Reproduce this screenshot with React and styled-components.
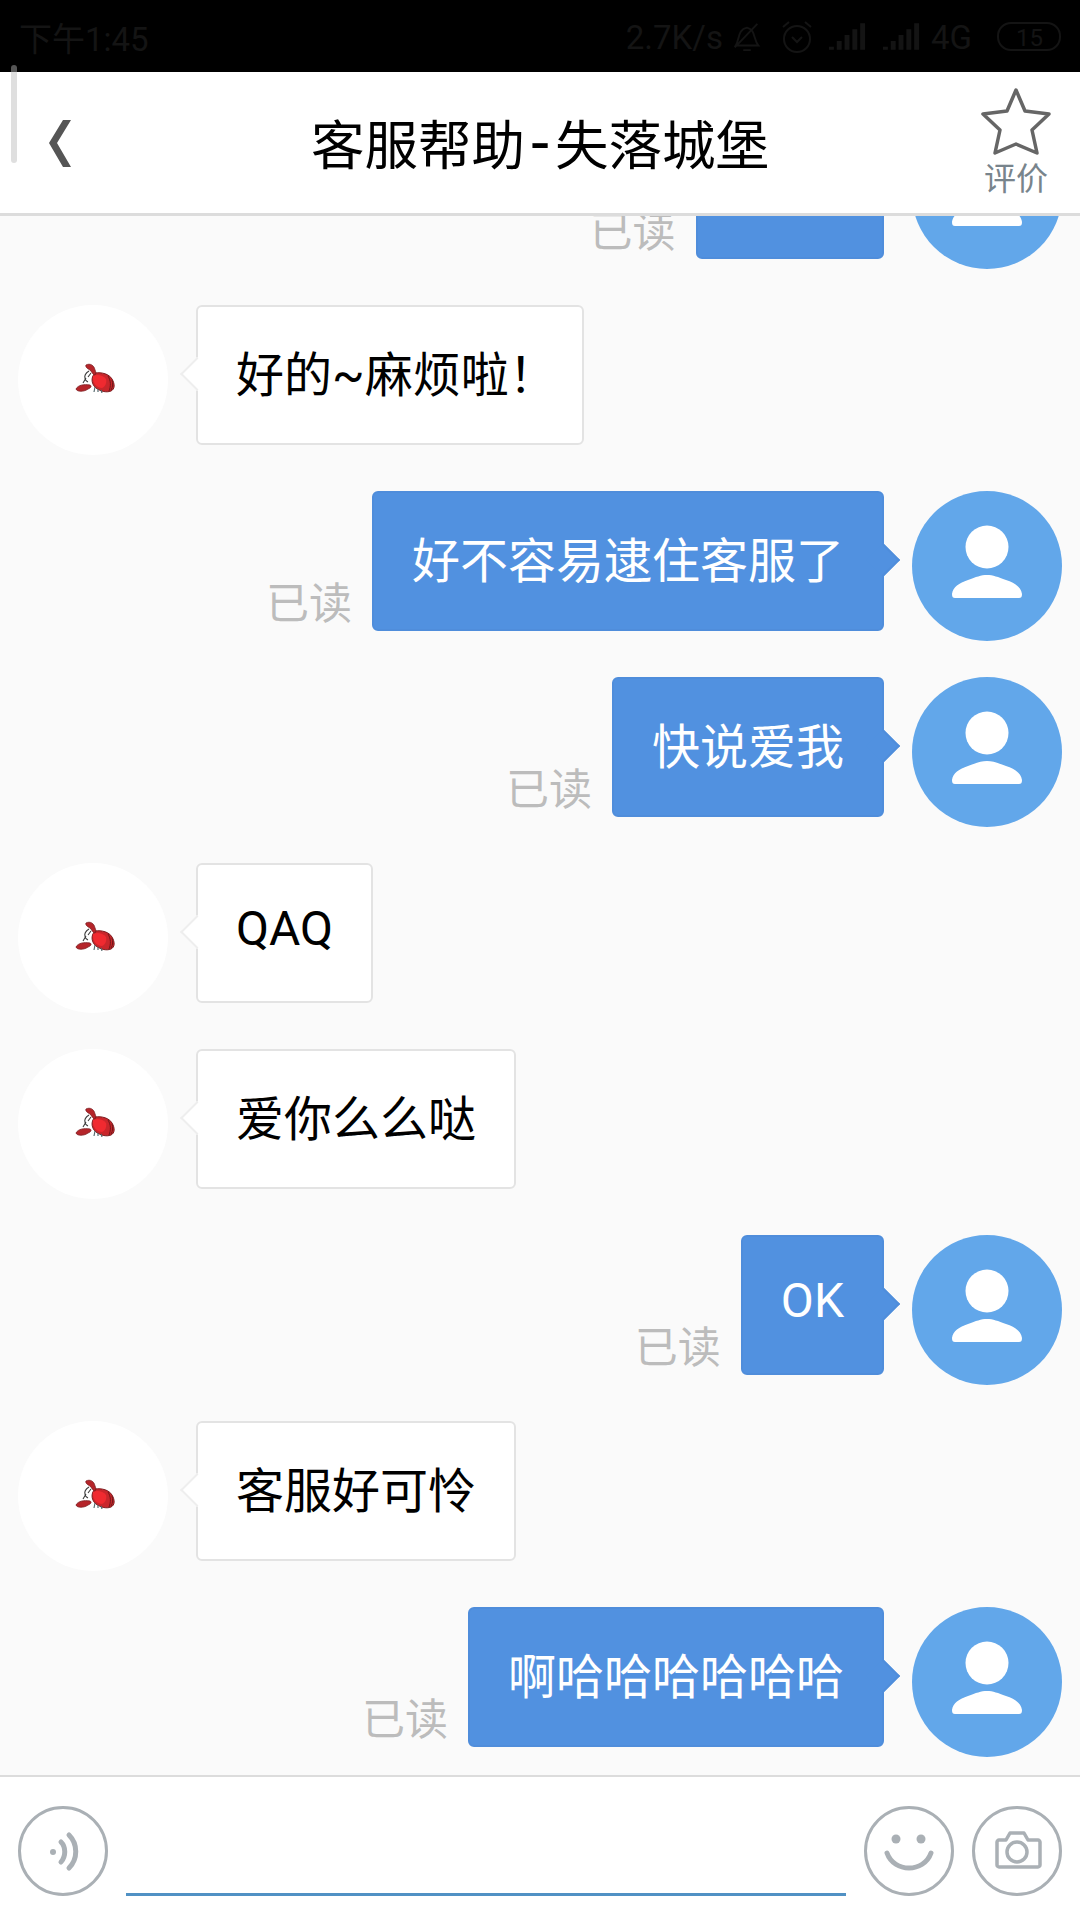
import React from "react";
import styled, { createGlobalStyle } from "styled-components";

const GlobalStyle = createGlobalStyle`
  html, body { margin: 0; padding: 0; background: #fafafa; }
  body { font-family: Roboto, "Noto Sans CJK SC", "Noto Sans", sans-serif; }
`;

const Page = styled.div`
  position: relative;
  width: 1080px;
  height: 1920px;
  display: flex;
  flex-direction: column;
  overflow: hidden;
`;

const StatusBar = styled.div`
  height: 72px;
  flex: none;
  background: #000;
  color: #141414;
  display: flex;
  align-items: center;
  justify-content: space-between;
  padding: 2px 17px 0 19px;
  box-sizing: border-box;
  font-size: 33px;
`;

const StatusRight = styled.div`
  display: flex;
  align-items: center;
`;

const StatusItem = styled.span`
  display: flex;
  align-items: center;
  margin-left: ${(p) => p.$gap}px;
`;

const ScrollMark = styled.div`
  position: absolute;
  z-index: 2;
  left: 11px;
  top: 65px;
  width: 6px;
  height: 98px;
  border-radius: 3px;
  background: linear-gradient(#555 0 7px, #dfdfdf 7px);
`;

const Header = styled.header`
  height: 144px;
  flex: none;
  box-sizing: border-box;
  background: #fff;
  border-bottom: 3px solid #dcdcdc;
  display: grid;
  grid-template-columns: 1fr auto 1fr;
  align-items: center;
  position: relative;
  z-index: 1;
`;

const Back = styled.div`
  padding-left: 48px;
  height: 50px;
  display: flex;
  align-items: center;
`;

const Title = styled.h1`
  margin: 5px 0 0;
  font-size: 53.5px;
  font-weight: 400;
  color: #000;
  line-height: 1;
  white-space: nowrap;
`;

const Dash = styled.span`
  display: inline-block;
  width: 30px;
  text-align: center;
  font-size: 64px;
  line-height: 53px;
`;

const Rate = styled.div`
  justify-self: end;
  width: 100px;
  margin-right: 14px;
  display: flex;
  flex-direction: column;
  align-items: center;
  gap: 3px;
  color: #78848c;
  font-size: 32px;
  line-height: 38px;
  align-self: start;
  padding-top: 15px;
`;

const Chat = styled.main`
  flex: 1;
  min-height: 0;
  overflow: hidden;
  background: #fafafa;
  display: flex;
  flex-direction: column;
  justify-content: flex-end;
  gap: 36px;
  padding: 0 18px 18px;
`;

const Row = styled.div`
  flex: none;
  display: flex;
  align-items: flex-start;
  justify-content: ${(p) => (p.$mine ? "flex-end" : "flex-start")};
`;

const Avatar = styled.div`
  width: 150px;
  height: 150px;
  flex: none;
  border-radius: 50%;
  background: ${(p) => (p.$mine ? "#62a7ea" : "#fff")};
  display: flex;
  align-items: center;
  justify-content: center;
`;

const Bubble = styled.div`
  position: relative;
  box-sizing: border-box;
  height: 140px;
  padding: 0 38px 9px;
  margin: ${(p) => (p.$mine ? "0 28px 0 0" : "0 0 0 28px")};
  ${(p) => (p.$width ? `width: ${p.$width}px;` : "")}
  border-radius: 6px;
  border: 2px solid ${(p) => (p.$mine ? "#4f8ddb" : "#e3e3e3")};
  background: ${(p) => (p.$mine ? "#5191e0" : "#fff")};
  color: ${(p) => (p.$mine ? "#fff" : "#000")};
  font-size: 48px;
  display: flex;
  align-items: center;
  white-space: nowrap;

  &::after {
    content: "";
    position: absolute;
    top: 50%;
    ${(p) => (p.$mine ? "right: -13px;" : "left: -13px;")}
    width: 22px;
    height: 22px;
    margin-top: -13px;
    background: inherit;
    transform: rotate(45deg);
    ${(p) =>
      p.$mine
        ? "border-top: 2px solid #4f8ddb; border-right: 2px solid #4f8ddb;"
        : "border-left: 2px solid #eeeeee; border-bottom: 2px solid #eeeeee;"}
  }
`;

const ReadLabel = styled.span`
  align-self: flex-end;
  margin: 0 20px 12px 0;
  height: 50px;
  line-height: 50px;
  font-size: 43px;
  color: #bcbcbc;
`;

const Composer = styled.footer`
  height: 145px;
  flex: none;
  box-sizing: border-box;
  background: #fff;
  border-top: 2px solid #dcdcdc;
  padding: 29px 18px 0;
  display: flex;
  align-items: flex-start;
`;

const RoundButton = styled.div`
  width: 90px;
  height: 90px;
  flex: none;
  margin-left: ${(p) => p.$gap || 0}px;
`;

const InputLine = styled.div`
  width: 720px;
  height: 90px;
  box-sizing: border-box;
  margin-left: 18px;
  border-bottom: 3px solid #5091c4;
`;

const LobsterIcon = styled.svg`
  margin: -4px 0 0 3px;
`;

const PersonIcon = styled.svg`
  margin-top: -9px;
`;

const Lobster = () => (
  <LobsterIcon width="40" height="30" viewBox="0 0 40 30">
    <path d="M20 10 C27 9 34 11 37 16 C40 21 40 26 36 28 C31 30 25 28 21 25 C17 22 15 15 20 10 Z" fill="#c9262b" stroke="#7c1b1e" strokeWidth="1" />
    <path d="M18 13 C22 11 28 12 31 16 C32 20 30 24 27 25 C22 25 17 20 18 13 Z" fill="#f02a30" />
    <path d="M33 13 C36 18 36 23 34 28 M37 17 C38 20 38 24 36 27" fill="none" stroke="#701719" strokeWidth="1" />
    <path d="M11 2 C15 0 19 2 20 7 C21 9 21 11 20 12 C18 12 17 9 15 7 C13 6 10 4 11 2 Z" fill="#b5252a" stroke="#7a1b1e" strokeWidth="0.8" />
    <path d="M14 8 C11 10 9 12 10 15 C10 17 11 18 13 19 M16 10 L13 14 M11 15 L8 20" fill="none" stroke="#3c3c3c" strokeWidth="1.1" />
    <path d="M1 26 C3 22 9 21 15 22 C17 23 16 25 13 26 C9 29 2 29 1 26 Z" fill="#b5252a" stroke="#7a1b1e" strokeWidth="0.8" />
    <path d="M20 24 L19 29 M23 26 L23 29 M26 27 L27 30" fill="none" stroke="#566a6e" strokeWidth="1.2" />
  </LobsterIcon>
);

const Person = () => (
  <PersonIcon width="72" height="73" viewBox="0 0 72 73">
    <circle cx="36" cy="22" r="21.5" fill="#fff" />
    <path d="M1 69 C2 62 8 58 17 55 C25 52 30 50 36 50 C42 50 47 52 55 55 C64 58 70 62 71 69 C71 72 70 73 68 73 L4 73 C2 73 1 72 1 69 Z" fill="#fff" />
  </PersonIcon>
);

const Ring = ({ children }) => (
  <svg width="90" height="90" viewBox="0 0 90 90" fill="none" stroke="#aab0b5" strokeWidth="3">
    <circle cx="45" cy="45" r="43.5" />
    {children}
  </svg>
);

const messages = [
  { mine: true, text: "你好!" },
  { text: "好的~麻烦啦！", width: 388 },
  { mine: true, text: "好不容易逮住客服了" },
  { mine: true, text: "快说爱我" },
  { text: "QAQ" },
  { text: "爱你么么哒" },
  { mine: true, text: "OK" },
  { text: "客服好可怜" },
  { mine: true, text: "啊哈哈哈哈哈哈" },
];

const Signal = () => (
  <svg width="39" height="28" viewBox="0 0 40 28" fill="#141414">
    <path d="M1 24h5v3H1zM9 18h5v9H9zM17 12h5v15h-5zM25 6h5v21h-5zM33 0h5v27h-5z" />
  </svg>
);

export default function App() {
  return (
    <Page>
      <GlobalStyle />
      <StatusBar>
        <span>下午1:45</span>
        <StatusRight>
          <span>2.7K/s</span>
          <StatusItem $gap={8}>
            <svg width="32" height="34" viewBox="0 0 34 34" fill="none" stroke="#141414" strokeWidth="2">
              <path d="M5 26 C9 20 7 9 17 7 C26 9 24 20 29 26 Z M13 31 H21 M4 28 L28 3" />
            </svg>
          </StatusItem>
          <StatusItem $gap={18}>
            <svg width="32" height="34" viewBox="0 0 32 34" fill="none" stroke="#141414" strokeWidth="2">
              <circle cx="16" cy="19" r="13" />
              <path d="M11 17 L16 22 L21 17 M2 7 L8 2 M30 7 L24 2" />
            </svg>
          </StatusItem>
          <StatusItem $gap={15}>
            <Signal />
          </StatusItem>
          <StatusItem $gap={15}>
            <Signal />
          </StatusItem>
          <StatusItem $gap={10}>4G</StatusItem>
          <StatusItem $gap={25}>
            <svg width="66" height="30" viewBox="0 0 66 30" fill="none" stroke="#141414" strokeWidth="2">
              <rect x="1" y="1" width="62" height="27" rx="13" />
              <text x="19" y="24" fontSize="24" fill="#141414" stroke="none">15</text>
            </svg>
          </StatusItem>
        </StatusRight>
      </StatusBar>
      <ScrollMark />
      <Header>
        <Back>
          <svg width="24" height="48" viewBox="0 0 24 48">
            <path d="M15 1 L23 1 L9 24 L23 48 L15 48 L1 24 Z" fill="#555" />
          </svg>
        </Back>
        <Title>
          客服帮助<Dash>-</Dash>失落城堡
        </Title>
        <Rate>
          <svg width="72" height="70" viewBox="0 0 72 70" fill="none" stroke="#666" strokeWidth="3.5" strokeLinejoin="round">
            <path d="M36 3 L45 24 L69 27 L52 43 L57 66 L36 57 L15 66 L20 43 L3 27 L27 24 Z" />
          </svg>
          <span>评价</span>
        </Rate>
      </Header>
      <Chat>
        {messages.map((m, i) =>
          m.mine ? (
            <Row key={i} $mine>
              <ReadLabel>已读</ReadLabel>
              <Bubble $mine>{m.text}</Bubble>
              <Avatar $mine>
                <Person />
              </Avatar>
            </Row>
          ) : (
            <Row key={i}>
              <Avatar>
                <Lobster />
              </Avatar>
              <Bubble $width={m.width}>{m.text}</Bubble>
            </Row>
          )
        )}
      </Chat>
      <Composer>
        <RoundButton>
          <Ring>
            <circle cx="35" cy="46" r="3" fill="#aab0b5" stroke="none" />
            <path d="M43 36 C48 41 48 50 43 56" strokeWidth="5" strokeLinecap="round" />
            <path d="M51 29 C60 38 60 53 51 62" strokeWidth="5" strokeLinecap="round" />
          </Ring>
        </RoundButton>
        <InputLine />
        <RoundButton $gap={18}>
          <Ring>
            <circle cx="32" cy="33" r="4.5" fill="#aab0b5" stroke="none" />
            <circle cx="57" cy="33" r="4.5" fill="#aab0b5" stroke="none" />
            <path d="M23 47 C30 67 60 67 67 47" strokeWidth="5" strokeLinecap="round" />
          </Ring>
        </RoundButton>
        <RoundButton $gap={18}>
          <Ring>
            <path d="M25 36 C25 35 26 34 27 34 H34 L38 27 H52 L56 34 H66 C67 34 68 35 68 36 V59 C68 60 67 61 66 61 H27 C26 61 25 60 25 59 Z" strokeWidth="3.5" strokeLinejoin="round" />
            <circle cx="45" cy="46" r="10" strokeWidth="3.5" />
          </Ring>
        </RoundButton>
      </Composer>
    </Page>
  );
}
